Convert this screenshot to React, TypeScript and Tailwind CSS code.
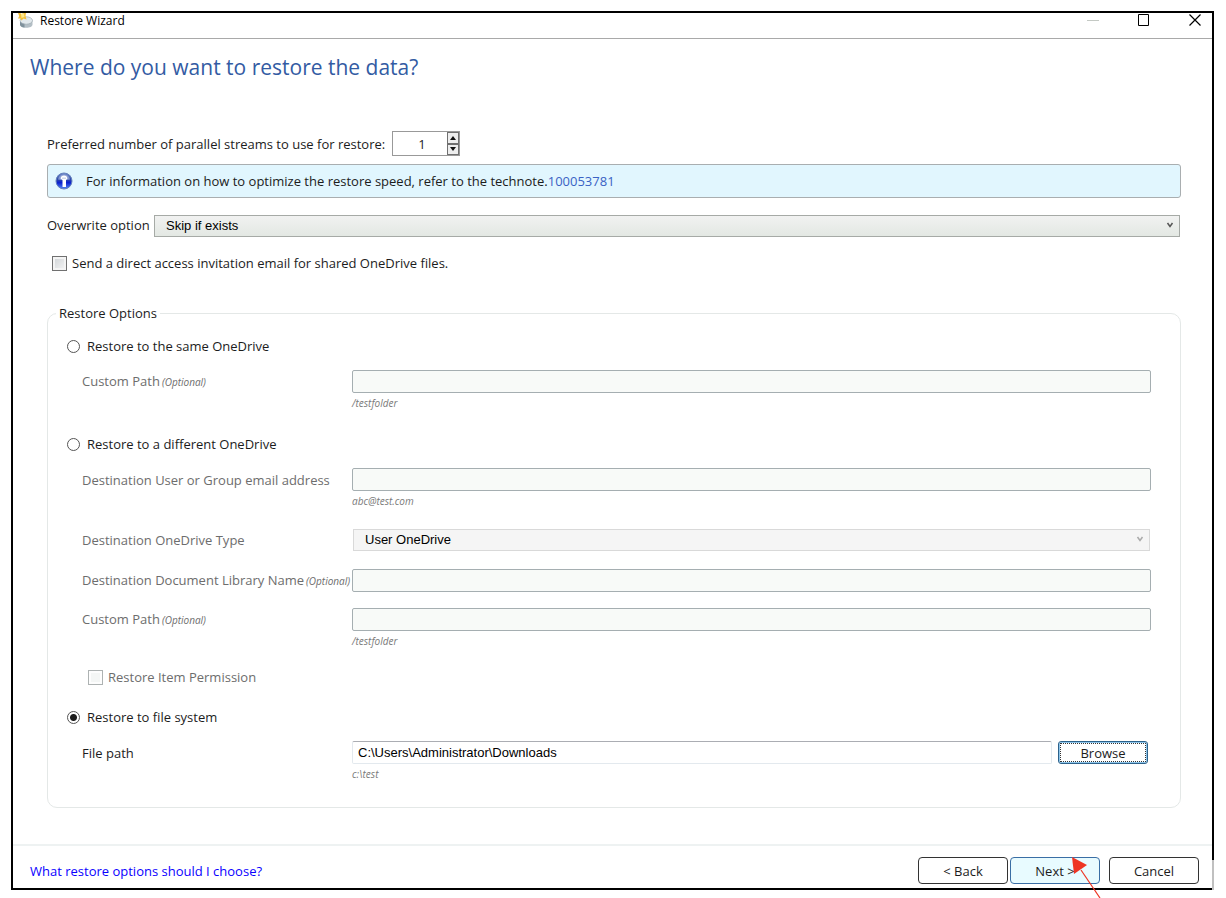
import { useState } from "react";
import type { ReactNode } from "react";

const textBox =
  "h-[23px] w-full min-w-0 rounded-[2px] border border-[#a5aeb1] bg-[#f8faf8] px-[5px] font-['Liberation_Sans',sans-serif] text-[13px] text-black outline-none";
const radioClass =
  "h-[13px] w-[13px] shrink-0 appearance-none rounded-full border border-[#555] bg-white checked:bg-[radial-gradient(circle,#1c1c1c_0,#1c1c1c_3px,#ffffff_4px)]";
const footerButton =
  "h-[27px] w-[90px] rounded-[4px] border text-center text-[13px] text-[#1c1c1c]";

function Row({ id, label, optional, hint, muted = true, children }: {
  id: string;
  label: string;
  optional?: boolean;
  hint?: string;
  muted?: boolean;
  children: ReactNode;
}) {
  return (
    <div className="grid grid-cols-[270px_minmax(0,1fr)] items-center pl-[34px]">
      <label htmlFor={id} className={muted ? "whitespace-nowrap text-[#6d6d6d]" : "whitespace-nowrap"}>
        {label}
        {optional && <i className="pl-0.5 text-[10px]">(Optional)</i>}
      </label>
      {children}
      {hint && <i className="col-start-2 h-5 text-[10px] leading-5 text-[#7a7a7a]">{hint}</i>}
    </div>
  );
}

function Chevron({ className }: { className: string }) {
  return (
    <svg className={className} width="8" height="6" viewBox="0 0 8 6" fill="none" stroke="currentColor" strokeWidth="1.5" aria-hidden="true">
      <path d="M1.5 1 L4 4.5 L6.5 1" />
    </svg>
  );
}

function DiskIcon() {
  return (
    <svg width="15" height="15" viewBox="0 0 15 15" aria-hidden="true">
      <path d="M2 8v3.500c0 2 2.600 3.300 6.200 3.300s6.300-1.300 6.300-3.300V7z" fill="#b3bec5" />
      <path d="M2 9v2.500c0 1.600 1.800 2.700 4.500 3.100V9z" fill="#7f919c" />
      <ellipse cx="8.300" cy="7.500" rx="6.200" ry="3.700" fill="#e1e8ec" stroke="#a0adb5" strokeWidth="0.700" />
      <path d="M0 0h2l1.500 1L5.500 0H8L7.500 3 8.500 6.500 5.500 5.500 3.500 7.500 2.500 5.500 0 5.500 1.200 3z" fill="#f4bf38" />
      <path d="M3 1l3-.5.5 3.500L3.500 5z" fill="#fde88a" />
    </svg>
  );
}

function InfoIcon() {
  return (
    <svg width="18" height="18" viewBox="0 0 18 18" aria-hidden="true">
      <defs>
        <linearGradient id="ball" x1="0" y1="0" x2="0" y2="1">
          <stop offset="0" stopColor="#6f8acb" />
          <stop offset="0.400" stopColor="#2f49a8" />
          <stop offset="0.600" stopColor="#0a1fd0" />
          <stop offset="1" stopColor="#5a8af2" />
        </linearGradient>
      </defs>
      <circle cx="9" cy="9" r="8" fill="url(#ball)" stroke="#6682bd" />
      <path d="M3 7.500Q4 2.500 9 2.500T15 7.500Q9 9 3 7.500z" fill="#b9c8ea" opacity="0.550" />
      <path d="M5.500 6.500Q6 3.500 9 3.500T12.500 6.500L11 8v7H7.500V8z" fill="#fff" />
      <path d="M7 6.200h4" stroke="#a9b8e0" strokeWidth="0.800" />
    </svg>
  );
}

export default function App() {
  const [streams, setStreams] = useState(1);
  const [target, setTarget] = useState("file");

  return (
    <div className="flex min-h-screen flex-col bg-white pt-[11px] pr-3 pb-2 pl-[11px] font-['Open_Sans',sans-serif] text-[13px] leading-5 text-[#1c1c1c]">
      <div className="relative flex flex-1 flex-col border-2 border-black">
        <header className="flex h-[26px] items-start justify-between border-b border-[#a9a9a9] pr-[10px] pl-[5px]">
          <div className="flex gap-[7px]">
            <DiskIcon />
            <span className="text-[12px] leading-4 text-black">Restore Wizard</span>
          </div>
          <div className="flex h-[14px] items-center gap-[37px]">
            <button aria-label="Minimize" className="text-[#c4c9c4]">
              <svg width="14" height="14" viewBox="0 0 14 14" stroke="currentColor"><path d="M1 7.500h12" /></svg>
            </button>
            <button aria-label="Maximize" className="text-black">
              <svg width="14" height="14" viewBox="0 0 14 14" fill="none" stroke="currentColor"><path d="M1.500 1.500h10v11h-10z" /></svg>
            </button>
            <button aria-label="Close" className="text-black">
              <svg width="14" height="14" viewBox="0 0 14 14" stroke="currentColor" strokeWidth="1.200"><path d="M1.500 1.500l11 11M12.500 1.500l-11 11" /></svg>
            </button>
          </div>
        </header>

        <main className="flex-1 pr-[31px] pb-9 pl-[34px]">
          <h1 className="-ml-[17px] pt-[12px] text-[21px] leading-8 text-[#335ba3]">Where do you want to restore the data?</h1>

          <div className="mt-[48px] flex items-center">
            <label htmlFor="streams" className="w-[345px]">Preferred number of parallel streams to use for restore:</label>
            <div className="flex h-[25px] w-[68px] border border-[#999]">
              <input
                id="streams"
                inputMode="numeric"
                value={streams}
                onChange={(e) => setStreams(Number(e.target.value) || 1)}
                className="w-[54px] min-w-0 pl-1 text-center text-[13px] outline-none"
              />
              <div className="flex w-3 flex-col">
                <button aria-label="More streams" onClick={() => setStreams(streams + 1)} className="flex flex-1 items-center justify-center border border-[#707070] bg-[#eee]">
                  <svg width="6" height="4" viewBox="0 0 6 4"><path d="M3 0l3 4H0z" fill="#111" /></svg>
                </button>
                <button aria-label="Fewer streams" onClick={() => setStreams(Math.max(1, streams - 1))} className="flex flex-1 items-center justify-center border border-[#707070] bg-[#eee]">
                  <svg width="6" height="4" viewBox="0 0 6 4"><path d="M0 0h6L3 4z" fill="#111" /></svg>
                </button>
              </div>
            </div>
          </div>

          <div className="mt-2 flex h-[34px] items-center rounded-[3px] border border-[#a9aeb0] bg-[#e1f6fe] pl-[7px]">
            <InfoIcon />
            <p className="pl-[13px]">
              For information on how to optimize the restore speed, refer to the technote.
              <a href="#technote" className="text-[#3a62c4]">100053781</a>
            </p>
          </div>

          <div className="mt-[17px] flex items-start pr-px">
            <label htmlFor="overwrite" className="w-[107px]">Overwrite option</label>
            <div className="relative flex-1">
              <select id="overwrite" className="block h-[22px] w-full appearance-none border border-[#a6aaa6] bg-linear-to-b from-[#f1f2f1] to-[#e3e8e3] px-[11px] font-['Liberation_Sans',sans-serif] text-[13px] text-black">
                <option>Skip if exists</option>
              </select>
              <Chevron className="pointer-events-none absolute top-[7px] right-[6px] text-[#555]" />
            </div>
          </div>

          <label className="mt-4 flex w-fit items-center gap-[5px] pl-[5px]">
            <input type="checkbox" className="h-[15px] w-[15px] appearance-none border border-[#707070] bg-linear-to-br from-[#cfd3d6] to-[#f6f6f6] shadow-[inset_0_0_0_2px_#f4f4f4] checked:bg-[#335ba3]" />
            Send a direct access invitation email for shared OneDrive files.
          </label>

          <fieldset className="mt-[30px] rounded-[10px] border border-[#e4e8e7] pr-[29px] pb-[23px]">
            <legend className="ml-[8px] px-[3px]">Restore Options</legend>

            <label className="mt-[13px] flex w-fit items-center gap-[7px] pl-[19px]">
              <input type="radio" name="target" className={radioClass} checked={target === "same"} onChange={() => setTarget("same")} />
              Restore to the same OneDrive
            </label>
            <div className="mt-[14px]">
              <Row id="same-path" label="Custom Path" optional hint="/testfolder">
                <input id="same-path" disabled className={textBox} />
              </Row>
            </div>

            <label className="mt-[21px] flex w-fit items-center gap-[7px] pl-[19px]">
              <input type="radio" name="target" className={radioClass} checked={target === "different"} onChange={() => setTarget("different")} />
              Restore to a different OneDrive
            </label>
            <div className="mt-[14px]">
              <Row id="email" label="Destination User or Group email address" hint="abc@test.com">
                <input id="email" disabled className={textBox} />
              </Row>
            </div>
            <div className="mt-[18px]">
              <Row id="drive-type" label="Destination OneDrive Type">
                <div className="relative px-px">
                  <select id="drive-type" disabled className="block h-[22px] w-full appearance-none border border-[#d9d9d9] bg-[#f5f5f5] px-[11px] font-['Liberation_Sans',sans-serif] text-[13px] text-black opacity-100">
                    <option>User OneDrive</option>
                  </select>
                  <Chevron className="pointer-events-none absolute top-[7px] right-[7px] text-[#aaa]" />
                </div>
              </Row>
            </div>
            <div className="mt-[18px]">
              <Row id="library" label="Destination Document Library Name" optional>
                <input id="library" disabled className={textBox} />
              </Row>
            </div>
            <div className="mt-4">
              <Row id="different-path" label="Custom Path" optional hint="/testfolder">
                <input id="different-path" disabled className={textBox} />
              </Row>
            </div>
            <label className="mt-4 flex w-fit items-center gap-[5px] pl-[40px] text-[#6d6d6d]">
              <input type="checkbox" disabled className="h-[15px] w-[15px] appearance-none border border-[#adb2b2] bg-[#f4f6f5] shadow-[inset_0_0_0_2px_#fdfdfd]" />
              Restore Item Permission
            </label>

            <label className="mt-5 flex w-fit items-center gap-[7px] pl-[19px]">
              <input type="radio" name="target" className={radioClass} checked={target === "file"} onChange={() => setTarget("file")} />
              Restore to file system
            </label>
            <div className="mt-[14px]">
              <Row id="file-path" label="File path" hint="c:\test" muted={false}>
                <div className="flex gap-[6px] pr-[3px]">
                  <input
                    id="file-path"
                    defaultValue="C:\Users\Administrator\Downloads"
                    className="h-[23px] min-w-0 flex-1 rounded-[2px] border border-[#e3e9ee] border-t-[#abadb3] bg-white px-[5px] font-['Liberation_Sans',sans-serif] text-[13px] text-black outline-none"
                  />
                  <button className="h-[23px] w-[90px] rounded-[3px] border border-[#2c628b] bg-white p-px shadow-[inset_0_0_0_1px_#8ec5ea]">
                    <span className="flex h-full items-center justify-center border border-dotted border-[#333]">Browse</span>
                  </button>
                </div>
              </Row>
            </div>
          </fieldset>
        </main>

        <footer className="flex h-11 items-center justify-between border-t-2 border-[#eef2f2] pt-[7px] pr-[13px] pl-[17px]">
          <a href="#help" className="text-[#0a00ff]">What restore options should I choose?</a>
          <div className="flex">
            <button className={`${footerButton} border-[#333] bg-white`}>&lt; Back</button>
            <button className={`${footerButton} ml-[2px] border-[#3a6ea5] bg-[#e8fbff]`}>Next &gt;</button>
            <button className={`${footerButton} ml-[9px] border-[#333] bg-white`}>Cancel</button>
          </div>
        </footer>

        <div className="absolute -right-[2px] -bottom-[2px] h-[30px] w-[2px] bg-[#c0c0c0]" />
        <svg className="pointer-events-none absolute right-[109px] -bottom-[10px]" width="31" height="41" viewBox="0 0 31 41" aria-hidden="true">
          <path d="M0 0L15 8L2 17z" fill="#ee3524" />
          <path d="M9 13L28 41" stroke="#ee3524" strokeWidth="1.200" />
        </svg>
      </div>
    </div>
  );
}
